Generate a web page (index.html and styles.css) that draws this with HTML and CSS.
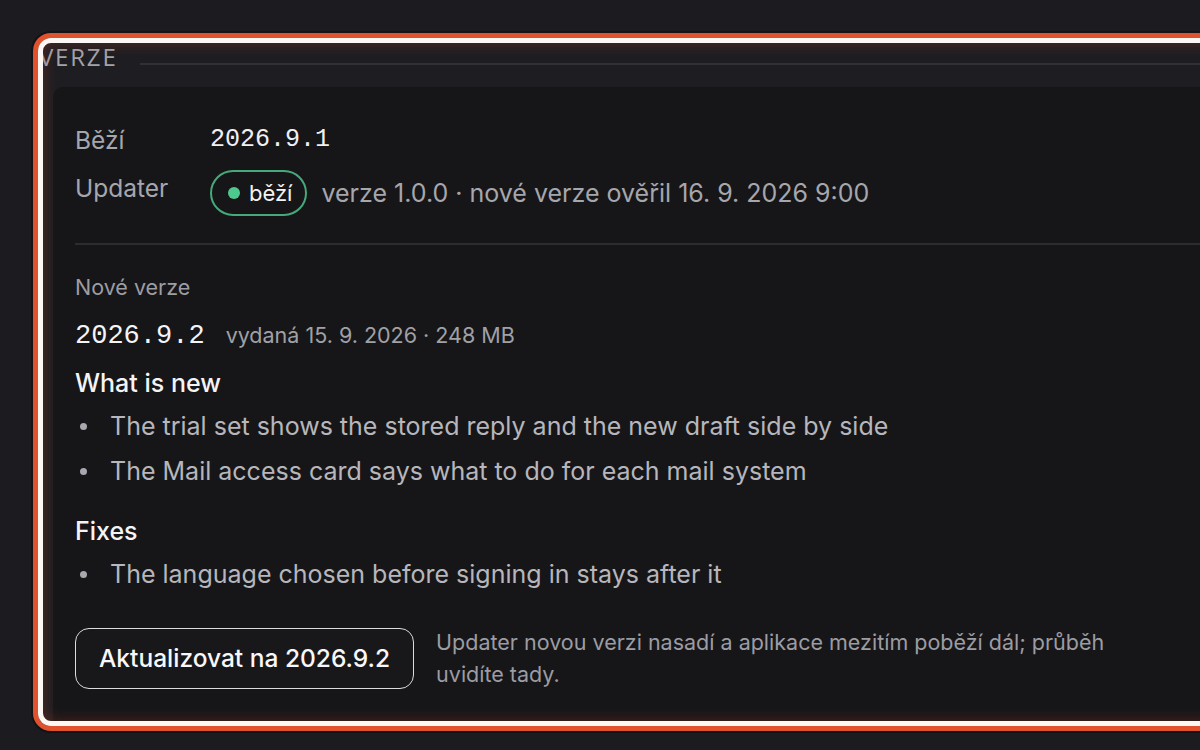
FILE: index.html
```html
<!DOCTYPE html>
<html lang="cs">
<head>
<meta charset="utf-8">
<title>Verze</title>
<link rel="stylesheet" href="styles.css">
</head>
<body>
<div class="page">
  <section class="section">
    <header class="section-head">
      <span class="section-title">VERZE</span>
      <span class="section-rule"></span>
    </header>
    <div class="card">
      <div class="kv">
        <div class="kv-label">Běží</div>
        <div class="kv-value mono">2026.9.1</div>
        <div class="kv-label kv-label-tall">Updater</div>
        <div class="kv-value status-line">
          <span class="pill"><span class="pill-dot"></span>běží</span>
          <span class="muted">verze 1.0.0 · nové verze ověřil 16. 9. 2026 9:00</span>
        </div>
      </div>
      <hr class="divider">
      <div class="sub-label">Nové verze</div>
      <div class="release">
        <span class="release-ver mono">2026.9.2</span>
        <span class="release-meta">vydaná 15. 9. 2026 · 248 MB</span>
      </div>
      <h3 class="notes-title">What is new</h3>
      <ul class="notes">
        <li>The trial set shows the stored reply and the new draft side by side</li>
        <li>The Mail access card says what to do for each mail system</li>
      </ul>
      <h3 class="notes-title fixes">Fixes</h3>
      <ul class="notes">
        <li>The language chosen before signing in stays after it</li>
      </ul>
      <div class="actions">
        <button class="btn">Aktualizovat na 2026.9.2</button>
        <p class="hint">Updater novou verzi nasadí a aplikace mezitím poběží dál; průběh uvidíte tady.</p>
      </div>
    </div>
  </section>
</div>
</body>
</html>
```

FILE: styles.css
```css
html, body {
  margin: 0;
  padding: 0;
  background: #1c1c20;
  overflow: hidden;
  height: 750px;
}
body {
  font-family: Inter, "Noto Sans", sans-serif;
  color: #e8e8ea;
}
.page {
  padding: 43px 0 0 43px;
}
.section {
  position: relative;
  width: 1240px;
  background: #1e1e22;
  border-radius: 8px;
  display: flex;
  flex-direction: column;
}
.section::after {
  content: "";
  position: absolute;
  inset: -5px;
  border-radius: 13px;
  pointer-events: none;
  box-shadow:
    0 0 0 5px #e2512d,
    0 0 0 7px rgba(10, 10, 12, 0.5),
    inset 0 0 0 5px #fdf7f4,
    inset 0 0 14px 6px rgba(210, 70, 40, 0.28);
}
.section-head {
  display: flex;
  align-items: flex-start;
  height: 44px;
}
.section-title {
  margin-left: -4px;
  font-size: 24px;
  line-height: 28px;
  letter-spacing: 1.8px;
  color: #a3a3ab;
  font-family: "Open Sans", Inter, sans-serif;
}
.section-rule {
  flex: 1;
  height: 2px;
  margin: 20px 0 0 22px;
  background: #303035;
}
.card {
  margin-left: 10px;
  background: #161618;
  border-radius: 10px 0 0 0;
  padding: 37px 0 31px 22px;
}
.kv {
  display: grid;
  grid-template-columns: 135px 1fr;
  row-gap: 14px;
  align-items: start;
}
.kv-label {
  font-size: 24.5px;
  line-height: 32px;
  color: #a6a6ad;
}
.kv-label-tall {
  line-height: 36px;
}
.mono {
  font-family: "Liberation Mono", "DejaVu Sans Mono", monospace;
}
.kv-value.mono {
  font-size: 25px;
  line-height: 32px;
  color: #f0f0f2;
}
.status-line {
  display: flex;
  align-items: center;
  gap: 14px;
}
.pill {
  display: inline-flex;
  align-items: center;
  gap: 9px;
  height: 46px;
  box-sizing: border-box;
  padding: 0 13px 0 16px;
  border: 2px solid #45a97b;
  border-radius: 23px;
  font-size: 22px;
  color: #f4f4f6;
}
.pill-dot {
  width: 12px;
  height: 12px;
  border-radius: 50%;
  background: #4fc88d;
}
.muted {
  font-size: 25px;
  color: #a6a6ad;
}
.divider {
  border: 0;
  height: 2px;
  background: #2c2c30;
  margin: 27px 0 0 0;
}
.sub-label {
  margin-top: 28px;
  font-size: 21.5px;
  line-height: 28px;
  color: #9d9da4;
}
.release {
  margin-top: 16px;
  display: flex;
  align-items: baseline;
  gap: 21px;
  line-height: 36px;
}
.release-ver {
  font-size: 27px;
  color: #f4f4f6;
}
.release-meta {
  font-size: 21.5px;
  color: #a0a0a7;
}
.notes-title {
  margin: 13px 0 0 0;
  font-size: 25px;
  line-height: 32px;
  font-weight: 500;
  color: #f4f4f6;
}
.notes-title.fixes {
  margin-top: 27px;
}
.notes {
  list-style: none;
  margin: 10px 0 0 0;
  padding: 0;
  display: flex;
  flex-direction: column;
  gap: 11px;
}
.notes li {
  display: flex;
  align-items: center;
  font-size: 25px;
  line-height: 34px;
  color: #b6b6bc;
}
.notes li::before {
  content: "";
  width: 7px;
  height: 7px;
  border-radius: 50%;
  background: #a8a8ae;
  margin: 0 23px 0 5px;
  flex: none;
}
.actions {
  margin-top: 35px;
  display: flex;
  align-items: center;
  gap: 22px;
}
.btn {
  height: 61px;
  padding: 0 23px;
  border: 1.5px solid #dcdcde;
  border-radius: 14px;
  background: #18181b;
  color: #f8f8fa;
  font-family: Inter, sans-serif;
  font-size: 24.5px;
  font-weight: 500;
  cursor: pointer;
}
.hint {
  margin: 0;
  max-width: 700px;
  font-size: 21.5px;
  line-height: 32px;
  color: #9c9ca3;
}
```
